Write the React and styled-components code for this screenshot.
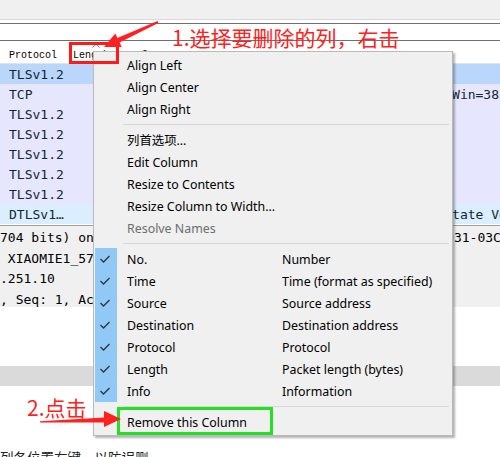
import React from "react";
import styled, { createGlobalStyle } from "styled-components";

// 列表行数据
const packets = [
  { proto: "TLSv1.2", len: "571", info: "Client Hello", kind: "selected" },
  { proto: "TCP", len: "54", info: "443 → 55120 [ACK] Seq=1 Ack=31257 Len=0 Win=385", kind: "tcp" },
  { proto: "TLSv1.2", len: "193", info: "Application Data", kind: "tcp" },
  { proto: "TLSv1.2", len: "104", info: "Application Data", kind: "tcp" },
  { proto: "TLSv1.2", len: "385", info: "Application Data", kind: "tcp" },
  { proto: "TLSv1.2", len: "139", info: "Application Data", kind: "tcp" },
  { proto: "TLSv1.2", len: "112", info: "Application Data", kind: "tcp" },
  { proto: "DTLSv1.2", len: "212", info: "Server Hello, Certificate, Certificate State Verify", kind: "udp" },
];

const details = [
  "704 bits) on interface \\Device\\NPF_{8C2E61D4-7A5B-4F09-AB931-03C2A1E5F6B7}, id 0",
  " XIAOMIE1_57:3f:a1 (8c:53:c3:57:3f:a1)",
  ".251.10",
  ", Seq: 1, Ack: 1, Len: 517",
];

const alignItems = ["Align Left", "Align Center", "Align Right"];
const columnItems = ["列首选项…", "Edit Column", "Resize to Contents", "Resize Column to Width…"];
const visibleColumns = [
  ["No.", "Number"],
  ["Time", "Time (format as specified)"],
  ["Source", "Source address"],
  ["Destination", "Destination address"],
  ["Protocol", "Protocol"],
  ["Length", "Packet length (bytes)"],
  ["Info", "Information"],
];

const rowColors = {
  selected: "#bad6fb",
  tcp: "#e7e6ff",
  udp: "#daeeff",
};

const CheckMark = () => (
  <svg width="22" height="22" viewBox="0 0 22 22">
    <polyline points="5.5,11 8.5,14 14.5,8" fill="none" stroke="#333" strokeWidth="1.3" />
  </svg>
);

const App = () => {
  return (
    <Page>
      <GlobalStyle />
      <Toolbar />
      <FilterBar>
        <FilterInput />
      </FilterBar>

      <ListHeader>
        <HeaderCell>Protocol</HeaderCell>
        <HeaderCell>
          <SortMark width="8" height="5" viewBox="0 0 8 5">
            <polyline points="0.5,4.5 4,1 7.5,4.5" fill="none" stroke="#888" strokeWidth="1" />
          </SortMark>
          Length
        </HeaderCell>
        <HeaderCell>Info</HeaderCell>
      </ListHeader>

      {packets.map((p, i) => (
        <PacketRow key={i} $bg={rowColors[p.kind]}>
          <ProtoCell>{p.proto}</ProtoCell>
          <LenCell>{p.len}</LenCell>
          <InfoCell>{p.info}</InfoCell>
        </PacketRow>
      ))}

      <DetailPane>
        {details.map((d, i) => (
          <DetailLine key={i}>{d}</DetailLine>
        ))}
      </DetailPane>
      <Blank $h={59} />
      <Band />
      <Footnote>列各位置右键，以防误删</Footnote>

      <Menu>
        {alignItems.map((t) => (
          <MenuItem key={t}>
            <CheckCell />
            <Label>{t}</Label>
          </MenuItem>
        ))}
        <Separator />
        {columnItems.map((t) => (
          <MenuItem key={t}>
            <CheckCell />
            <Label>{t}</Label>
          </MenuItem>
        ))}
        <MenuItem $disabled>
          <CheckCell />
          <Label>Resolve Names</Label>
        </MenuItem>
        <Separator />
        {visibleColumns.map(([name, desc]) => (
          <MenuItem key={name}>
            <CheckCell $on>
              <CheckMark />
            </CheckCell>
            <Label>{name}</Label>
            <Hint>{desc}</Hint>
          </MenuItem>
        ))}
        <Separator />
        <MenuItem>
          <CheckCell />
          <Label>Remove this Column</Label>
        </MenuItem>
      </Menu>

      {/* 标注 */}
      <RedFrame />
      <GreenFrame />
      <Callout $left={172} $top={27}>1.选择要删除的列，右击</Callout>
      <Callout $left={27} $top={397}>2.点击</Callout>
      <ArrowLayer width="500" height="457" viewBox="0 0 500 457">
        <polygon
          points="157.6,21.1 117.4,37.9 115.3,33.4 104,47 121.7,47 119.6,42.5 158.4,22.9"
          fill="#ff2020"
        />
        <polygon
          points="40,421.2 104,417.5 104,411 121,419 104,427 104,422.5 40,422.6"
          fill="#ff2020"
        />
      </ArrowLayer>
    </Page>
  );
};

const GlobalStyle = createGlobalStyle`
html, body {
  margin: 0;
  padding: 0;
  background: #fff;
}
body {
  width: 500px;
  height: 457px;
  overflow: hidden;
  font-family: "Noto Sans", "Noto Sans CJK SC", sans-serif;
}
`;

const Page = styled.div`
position: relative;
width: 500px;
height: 457px;
overflow: hidden;
display: flex;
flex-direction: column;
background: #fff;
`;

const Toolbar = styled.div`
height: 19px;
flex-shrink: 0;
background: #f0f0f0;
border-bottom: 1px solid #d9d9d9;
`;

const FilterBar = styled.div`
padding: 3px 0 2px;
flex-shrink: 0;
`;

const FilterInput = styled.div`
height: 16px;
background: #fff;
border-top: 1px solid #707070;
border-bottom: 1px solid #707070;
`;

const ListHeader = styled.div`
display: grid;
grid-template-columns: 68px 56px 1fr;
height: 20px;
flex-shrink: 0;
background: #fff;
border-bottom: 1px solid #e3e3e3;
font-family: "Liberation Mono", monospace;
font-size: 10px;
color: #000;
`;

const HeaderCell = styled.div`
position: relative;
display: flex;
align-items: center;
padding: 4px 0 0 5px;
white-space: nowrap;
overflow: hidden;
&:first-child {
  padding-left: 9px;
}
`;

const SortMark = styled.svg`
position: absolute;
top: 0;
left: 24px;
`;

const PacketRow = styled.div`
display: grid;
grid-template-columns: 68px 56px 1fr;
height: 20px;
flex-shrink: 0;
background: ${(p) => p.$bg};
font-family: "DejaVu Sans Mono", monospace;
font-size: 13px;
color: #12272e;
align-items: center;
white-space: nowrap;
`;

const ProtoCell = styled.div`
padding-left: 9px;
overflow: hidden;
text-overflow: ellipsis;
`;

const LenCell = styled.div`
text-align: right;
padding-right: 8px;
`;

const InfoCell = styled.div`
padding-left: 15px;
overflow: hidden;
`;

const DetailPane = styled.div`
height: 82px;
flex-shrink: 0;
margin-top: 1px;
padding-top: 2px;
box-sizing: border-box;
border-top: 1px solid #a0a0a0;
background: #f0f0f0;
font-family: "DejaVu Sans Mono", monospace;
font-size: 13px;
color: #000;
`;

const DetailLine = styled.div`
height: 20.67px;
line-height: 20.67px;
white-space: pre;
overflow: hidden;
`;

const Blank = styled.div`
height: ${(p) => p.$h}px;
flex-shrink: 0;
`;

const Band = styled.div`
height: 20px;
flex-shrink: 0;
background: #dadada;
`;

const Footnote = styled.div`
margin-top: 62px;
font-family: "Noto Sans CJK SC", sans-serif;
font-size: 13.5px;
line-height: 18px;
color: #222;
white-space: nowrap;
`;

const Menu = styled.div`
position: absolute;
left: 93px;
top: 51px;
width: 360px;
box-sizing: border-box;
padding: 2px 1px;
background: #f0f0f0;
border: 1px solid #b9b9b9;
box-shadow: 2px 2px 2px rgba(0, 0, 0, 0.3);
font-family: "Noto Sans", "Noto Sans CJK SC", sans-serif;
font-size: 12.4px;
`;

const MenuItem = styled.div`
display: grid;
grid-template-columns: 22px 165px 1fr;
height: 22px;
color: ${(p) => (p.$disabled ? "#6d6d6d" : "#000")};
`;

const CheckCell = styled.div`
display: flex;
align-items: center;
justify-content: center;
background: ${(p) => (p.$on ? "#90c8f6" : "transparent")};
`;

const Label = styled.div`
display: flex;
align-items: center;
padding-left: 10px;
white-space: nowrap;
`;

const Hint = styled.div`
display: flex;
align-items: center;
white-space: nowrap;
`;

const Separator = styled.div`
height: 1px;
margin: 4px 2px 4px 28px;
background: #d7d7d7;
`;

const RedFrame = styled.div`
position: absolute;
left: 69px;
top: 42px;
width: 50px;
height: 22px;
box-sizing: border-box;
border: 3px solid #ff1a1a;
`;

const GreenFrame = styled.div`
position: absolute;
left: 117px;
top: 407px;
width: 156px;
height: 28px;
box-sizing: border-box;
border: 3px solid #22e022;
`;

const Callout = styled.div`
position: absolute;
left: ${(p) => p.$left}px;
top: ${(p) => p.$top}px;
font-family: "Noto Sans CJK SC", sans-serif;
font-size: 21px;
line-height: 21px;
color: #ff2020;
white-space: nowrap;
`;

const ArrowLayer = styled.svg`
position: absolute;
left: 0;
top: 0;
pointer-events: none;
`;

export default App;
